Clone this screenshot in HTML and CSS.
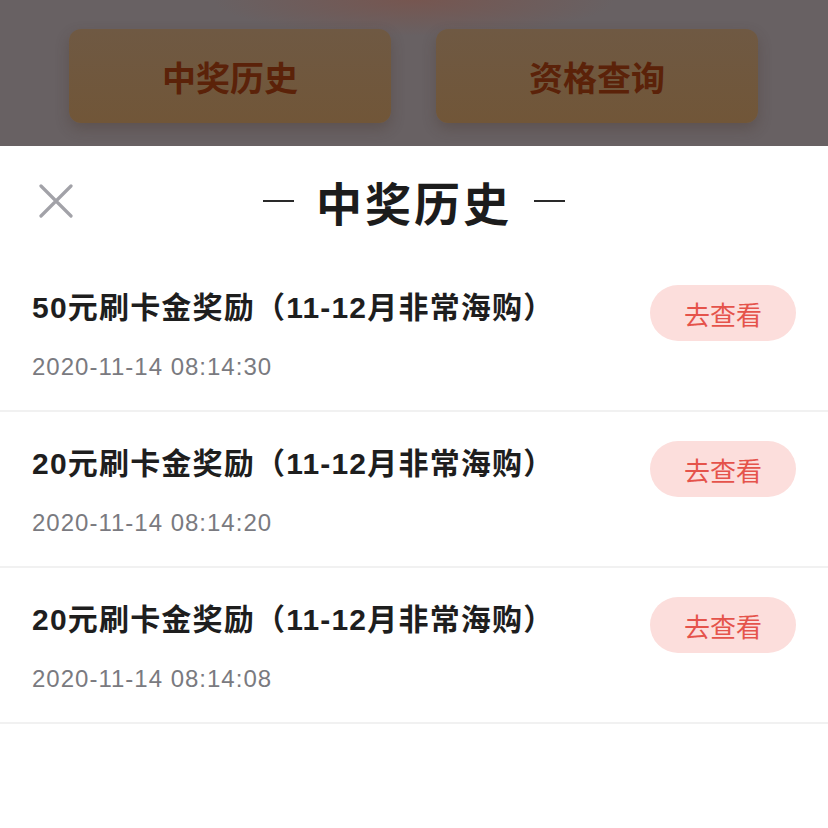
FILE: index.html
```html
<!DOCTYPE html>
<html lang="zh-CN">
<head>
  <meta charset="UTF-8" />
  <meta name="viewport" content="width=device-width, initial-scale=1.0" />
  <title>中奖历史</title>
  <link rel="stylesheet" href="styles.css">
</head>
<body>
  <div class="page">
    <div class="tabs">
      <div class="tab">中奖历史</div>
      <div class="tab">资格查询</div>
    </div>
  </div>

  <div class="sheet">
    <div class="sheet-head">
      <button class="close" aria-label="关闭">
        <svg width="34" height="34" viewBox="0 0 34 34">
          <path d="M2 2 L32 32 M32 2 L2 32" stroke="#a2a2a8" stroke-width="3.2" stroke-linecap="round" fill="none"/>
        </svg>
      </button>
      <h1><span class="dash"></span>中奖历史<span class="dash"></span></h1>
    </div>

    <ul class="list">
      <li class="item">
        <div class="info">
          <div class="name">50元刷卡金奖励（11-12月非常海购）</div>
          <div class="time">2020-11-14 08:14:30</div>
        </div>
        <a class="go">去查看</a>
      </li>
      <li class="item">
        <div class="info">
          <div class="name">20元刷卡金奖励（11-12月非常海购）</div>
          <div class="time">2020-11-14 08:14:20</div>
        </div>
        <a class="go">去查看</a>
      </li>
      <li class="item">
        <div class="info">
          <div class="name">20元刷卡金奖励（11-12月非常海购）</div>
          <div class="time">2020-11-14 08:14:08</div>
        </div>
        <a class="go">去查看</a>
      </li>
    </ul>
  </div>
</body>
</html>
```

FILE: styles.css
```css
* { margin: 0; padding: 0; box-sizing: border-box; }
html, body {
  height: 100%;
  font-family: "Liberation Sans", "Noto Sans CJK SC", sans-serif;
  background: #fff;
}
body { overflow: hidden; }

.page {
  height: 146px;
  background:
    radial-gradient(ellipse 200px 36px at 414px 0, #765650 0%, rgba(118,86,80,0) 100%),
    #686163;
}
.tabs {
  display: flex;
  gap: 45px;
  padding: 29px 0 0 69px;
}
.tab {
  width: 322px;
  height: 94px;
  border-radius: 12px;
  background: linear-gradient(180deg, #6f5943 0%, #715638 100%);
  box-shadow: 0 6px 14px rgba(70, 50, 40, 0.3);
  display: flex;
  align-items: center;
  justify-content: center;
  font-family: "Noto Sans CJK SC", sans-serif;
  font-weight: 700;
  font-size: 34px;
  color: #5b2209;
}

.sheet {
  background: #fff;
  border-radius: 12px 12px 0 0;
}

.sheet-head {
  height: 110px;
  display: grid;
  grid-template-columns: 1fr auto 1fr;
  align-items: center;
}
.close {
  border: none;
  background: none;
  width: 34px;
  height: 34px;
  margin-left: 39px;
  display: flex;
}
.sheet-head h1 {
  display: flex;
  align-items: center;
  gap: 22px;
  font-family: "Noto Sans CJK SC", serif;
  font-weight: 700;
  font-size: 46px;
  letter-spacing: 3px;
  color: #1c1c1c;
  line-height: 1;
}
.dash {
  width: 31px;
  height: 2px;
  background: #2a2a2a;
}

.list { list-style: none; }
.item {
  height: 156px;
  border-bottom: 2px solid #f1f1f1;
  padding: 0 32px;
  display: flex;
  justify-content: space-between;
  align-items: flex-start;
}
.name {
  margin-top: 34px;
  height: 36px;
  line-height: 36px;
  font-size: 30px;
  font-weight: 700;
  color: #1e1e1e;
  letter-spacing: 1.2px;
  white-space: nowrap;
}
.time {
  margin-top: 26px;
  line-height: 30px;
  font-size: 24px;
  letter-spacing: 1px;
  color: #7a7a80;
}
.go {
  margin-top: 29px;
  width: 146px;
  height: 56px;
  flex-shrink: 0;
  border-radius: 28px;
  background: #fcdedc;
  color: #e5534b;
  font-family: "Noto Sans CJK SC", sans-serif;
  font-size: 26px;
  display: flex;
  align-items: center;
  justify-content: center;
}
```
